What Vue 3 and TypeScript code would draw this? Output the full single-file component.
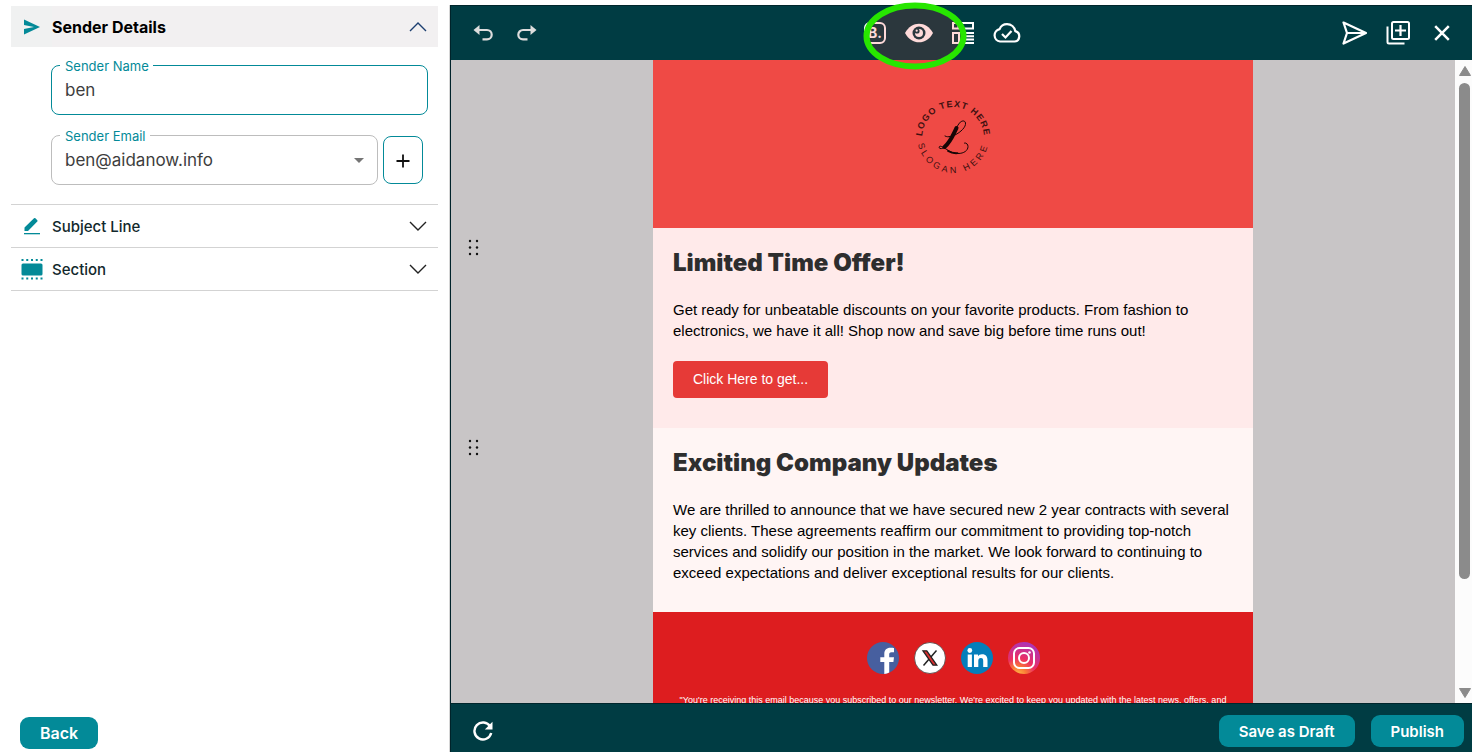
<script setup lang="ts">
import { ref } from 'vue'

interface Section {
  id: string
  tone: string
  title: string
  body: string
  action?: string
}

const senderName = ref('ben')
const senderEmail = ref('ben@aidanow.info')
const emails = ['ben@aidanow.info']

const sections: Section[] = [
  {
    id: 'offer',
    tone: 'tone-rose',
    title: 'Limited Time Offer!',
    body: 'Get ready for unbeatable discounts on your favorite products. From fashion to electronics, we have it all! Shop now and save big before time runs out!',
    action: 'Click Here to get...',
  },
  {
    id: 'updates',
    tone: 'tone-blush',
    title: 'Exciting Company Updates',
    body: 'We are thrilled to announce that we have secured new 2 year contracts with several key clients. These agreements reaffirm our commitment to providing top-notch services and solidify our position in the market. We look forward to continuing to exceed expectations and deliver exceptional results for our clients.',
  },
]
</script>

<template>
  <div class="app">
    <aside class="sidebar">
      <div class="panels">
        <button class="panel-head open" type="button" aria-expanded="true">
          <span class="panel-icon lead">
            <svg width="18" height="16" viewBox="0 0 18 16"><path d="M1 .5 17 8 1 15.500V10L11 8 1 6Z" fill="#038a98" /></svg>
          </span>
          <span class="panel-title">Sender Details</span>
          <svg class="chevron" width="18" height="10" viewBox="0 0 18 10"><path d="M1 9 9 1l8 8" fill="none" stroke="#1c3f70" stroke-width="1.4" /></svg>
        </button>

        <div class="panel-body">
          <div class="field active">
            <label for="sender-name">Sender Name</label>
            <input id="sender-name" v-model="senderName" type="text" />
          </div>
          <div class="email-row">
            <div class="field">
              <label for="sender-email">Sender Email</label>
              <select id="sender-email" v-model="senderEmail">
                <option v-for="e in emails" :key="e" :value="e">{{ e }}</option>
              </select>
              <svg class="caret" width="10" height="5" viewBox="0 0 10 5"><path d="M0 0h10L5 5Z" fill="#757575" /></svg>
            </div>
            <button class="add" type="button" aria-label="Add sender email">
              <svg width="14" height="16" viewBox="0 0 14 16"><path d="M7 2.500v13M.5 9h13" stroke="#111" stroke-width="1.8" /></svg>
            </button>
          </div>
        </div>

        <button class="panel-head" type="button" aria-expanded="false">
          <span class="panel-icon">
            <svg width="18" height="18" viewBox="0 0 18 18" fill="#038a98"><path d="M1.500 14V10.500L11 1.300a1 1 0 0 1 1.400 0L14.300 3.200a1 1 0 0 1 0 1.400L5 14Z" /><path d="M1 16h16V17.300H1Z" /></svg>
          </span>
          <span class="panel-title">Subject Line</span>
          <svg class="chevron" width="18" height="10" viewBox="0 0 18 10"><path d="m1 1 8 8 8-8" fill="none" stroke="#222" stroke-width="1.4" /></svg>
        </button>

        <button class="panel-head" type="button" aria-expanded="false">
          <span class="panel-icon">
            <svg width="22" height="22" viewBox="0 0 22 22"><rect x=".5" y="5.500" width="21" height="12" rx="1.500" fill="#038a98" /><path d="M.5 2h21M.5 20.500h21" stroke="#038a98" stroke-width="2" stroke-dasharray="2 2.750" /></svg>
          </span>
          <span class="panel-title">Section</span>
          <svg class="chevron" width="18" height="10" viewBox="0 0 18 10"><path d="m1 1 8 8 8-8" fill="none" stroke="#222" stroke-width="1.4" /></svg>
        </button>
      </div>

      <button class="btn back" type="button">Back</button>
    </aside>

    <main class="editor">
      <header class="toolbar">
        <div class="tools">
          <button type="button" aria-label="Undo">
            <svg width="20" height="18" viewBox="0 0 20 18"><path d="M5 6h9a4.700 4.700 0 0 1 0 9.400H9.500" fill="none" stroke="#ddd" stroke-width="2.200" /><path d="M.5 6 6.500 1v10Z" fill="#ddd" /></svg>
          </button>
          <button type="button" aria-label="Redo">
            <svg width="20" height="18" viewBox="0 0 20 18"><path d="M15 6H6a4.700 4.700 0 0 0 0 9.400h4.500" fill="none" stroke="#ddd" stroke-width="2.200" /><path d="M19.500 6 13.500 1v10Z" fill="#ddd" /></svg>
          </button>
        </div>

        <div class="tools">
          <button type="button" aria-label="Brand">
            <svg width="22" height="22" viewBox="0 0 22 22"><rect x="1" y="1" width="20" height="20" rx="5" fill="none" stroke="#fff" stroke-width="2" /><text class="brand-b" x="4" y="16">B.</text></svg>
          </button>
          <button class="preview" type="button" aria-label="Preview">
            <svg width="28" height="20" viewBox="0 0 28 20"><path d="M0 10C3.500 3.600 8.500.7 14 .7S24.500 3.600 28 10c-3.500 6.400-8.500 9.300-14 9.300S3.500 16.400 0 10Z" fill="#fff" /><circle cx="14" cy="10" r="6.500" fill="#003c43" /><circle cx="14" cy="10" r="4" fill="#fff" /><circle cx="12" cy="8" r="2.600" fill="#003c43" /><circle cx="11.700" cy="7.700" r="1.100" fill="#fff" /></svg>
            <svg class="spotlight" width="104" height="68" viewBox="0 0 104 68"><ellipse cx="52" cy="34" rx="48.500" ry="30.500" fill="#ff2324" fill-opacity=".17" stroke="none" /><ellipse cx="52" cy="34" rx="48.500" ry="30.500" fill="none" stroke="#27e600" stroke-width="6" /></svg>
          </button>
          <button type="button" aria-label="Layout">
            <svg width="22" height="22" viewBox="0 0 22 22" fill="none" stroke="#fff" stroke-width="2"><path d="M1 1h20v5.500H1ZM6.500 1v5.500M1 11h6v10H1Z" /><path d="M10 11h12M10 14.300h12M10 17.600h12M10 21h12" /></svg>
          </button>
          <button type="button" aria-label="Saved to cloud">
            <svg width="28" height="20" viewBox="0 0 28 20" fill="none" stroke="#fff" stroke-width="2.200"><path d="M7 18.500h14.500a5.300 5.300 0 0 0 .8-10.400C21.500 4.200 18.200 1.200 14 1.200c-3.400 0-6.200 1.900-7.400 4.900A6.300 6.300 0 0 0 7 18.500Z" /><path d="m9 11 3.500 3.500 6-6.500" /></svg>
          </button>
        </div>

        <div class="tools">
          <button type="button" aria-label="Send">
            <svg width="26" height="24" viewBox="0 0 26 24" fill="none" stroke="#fff" stroke-width="2.200" stroke-linejoin="round"><path d="M2.500 1.500 25 12l-22.500 10.500L6 12ZM6 12h17" /></svg>
          </button>
          <button type="button" aria-label="Duplicate">
            <svg width="24" height="24" viewBox="0 0 24 24" fill="none" stroke="#fff" stroke-width="2"><rect x="6" y="1" width="17" height="17" rx="1.500" /><path d="M1.500 5.500V21a1.500 1.500 0 0 0 1.500 1.500h15.500" /><path d="M14.500 4v11M9 9.500h11" stroke-width="2.200" /></svg>
          </button>
          <button type="button" aria-label="Close">
            <svg width="16" height="16" viewBox="0 0 16 16"><path d="m1.200 1.200 13.600 13.600M14.800 1.200 1.200 14.800" stroke="#fff" stroke-width="2.500" /></svg>
          </button>
        </div>
      </header>

      <div class="stage">
        <div class="canvas">
          <div class="row">
            <div class="hero">
              <svg width="88" height="92" viewBox="-5 -2 88 92" role="img" aria-label="Logo">
                <defs>
                  <path id="arc-top" d="M8 40A31 31 0 0 1 70 40" />
                  <path id="arc-bottom" d="M3 38A36 37 0 0 0 75 38" />
                </defs>
                <text class="ring"><textPath href="#arc-top" startOffset="50%">LOGO TEXT HERE</textPath></text>
                <text class="ring slogan"><textPath href="#arc-bottom" startOffset="50%">SLOGAN HERE</textPath></text>
                <g fill="none" stroke="#170606" stroke-linecap="round">
                  <path d="M41 37c6-3 11-8 10.500-12-.5-3-4-2.500-6 0-4 5-8 16-13 22-2 3-5 4-6.500 3.500-2-1-.5-3 1.500-2 5 2 9 7 16.500 7 6 0 10-3 10-7 0-2-1.500-4-3.500-3.500M31 38c2 1 3.500 1 5 .5" stroke-width="1" />
                  <path d="M42.500 30c-3 6-6 14-12 19" stroke-width="4" />
                  <path d="M34 53c3 1.800 6 2.500 9.500 2.200" stroke-width="1.800" />
                </g>
              </svg>
            </div>
          </div>

          <section v-for="s in sections" :key="s.id" class="row">
            <button class="drag" type="button" :aria-label="`Move ${s.title}`">
              <svg width="12" height="17" viewBox="0 0 12 17" fill="#111"><circle cx="2" cy="2" r="1.200" /><circle cx="9" cy="2" r="1.200" /><circle cx="2" cy="8.500" r="1.200" /><circle cx="9" cy="8.500" r="1.200" /><circle cx="2" cy="15" r="1.200" /><circle cx="9" cy="15" r="1.200" /></svg>
            </button>
            <div class="block" :class="s.tone">
              <h2>{{ s.title }}</h2>
              <p>{{ s.body }}</p>
              <a v-if="s.action" class="cta" href="#">{{ s.action }}</a>
            </div>
          </section>

          <div class="row">
            <div class="foot">
              <div class="socials">
                <a href="#" aria-label="Facebook">
                  <svg width="32" height="32" viewBox="0 0 32 32"><circle cx="16" cy="16" r="16" fill="#475f9f" /><path d="M17.300 31.900V20H13.300v-4.700h4V12c0-4 2.400-6.200 6-6.200 1.700 0 3.200.2 3.700.3v4.200h-2.500c-2 0-2.300 1-2.300 2.300v2.700H27l-.6 4.700h-4.200v10.500c-1.500.9-3.100 1.300-4.900 1.400Z" fill="#fff" /></svg>
                </a>
                <a href="#" aria-label="X">
                  <svg width="32" height="32" viewBox="0 0 32 32"><circle cx="16" cy="16" r="15.500" fill="#fff" stroke="#333" stroke-width=".7" /><path d="M22.500 8.500 9.500 23.500" stroke="#222" stroke-width="1.500" /><path d="M9 8.800h3.800l10 14.400H19Z" fill="#d9302f" stroke="#222" stroke-width="1.300" /></svg>
                </a>
                <a href="#" aria-label="LinkedIn">
                  <svg width="32" height="32" viewBox="0 0 32 32"><circle cx="16" cy="16" r="16" fill="#057ebb" /><circle cx="8.800" cy="8.500" r="2.400" fill="#fff" /><path d="M6.700 12.500h4.200V25H6.700Z" fill="#fff" /><path d="M13 12.500h4v1.800c.7-1.300 2-2.100 4-2.100 4.200 0 5.500 2.600 5.500 6.400V25h-4.300v-5.700c0-1.500-.1-3.300-2.300-3.300s-2.600 1.600-2.600 3.200V25H13Z" fill="#fff" /></svg>
                </a>
                <a href="#" aria-label="Instagram">
                  <svg width="32" height="32" viewBox="0 0 32 32">
                    <defs>
                      <radialGradient id="insta" cx=".3" cy="1.050" r="1.100"><stop offset="0" stop-color="#ffc34a" /><stop offset=".25" stop-color="#fa7a36" /><stop offset=".5" stop-color="#ec2f63" /><stop offset="1" stop-color="#a834bd" /></radialGradient>
                    </defs>
                    <circle cx="16" cy="16" r="16" fill="url(#insta)" />
                    <g fill="none" stroke="#fff" stroke-width="2"><rect x="6" y="6" width="20" height="20" rx="5.500" /><circle cx="16" cy="16" r="5" /></g>
                    <circle cx="21.500" cy="10.500" r="1.300" fill="#fff" />
                  </svg>
                </a>
              </div>
              <p class="legal">"You're receiving this email because you subscribed to our newsletter. We're excited to keep you updated with the latest news, offers, and</p>
            </div>
          </div>
        </div>

        <div class="scroll" aria-hidden="true">
          <svg width="12" height="10" viewBox="0 0 12 10"><path d="M6 .5 11.500 9.500H.5Z" fill="#8b8b8b" stroke="#8b8b8b" stroke-linejoin="round" /></svg>
          <div class="track"><div class="thumb"></div></div>
          <svg width="12" height="10" viewBox="0 0 12 10"><path d="M6 9.500 11.500.5H.5Z" fill="#8b8b8b" stroke="#8b8b8b" stroke-linejoin="round" /></svg>
        </div>
      </div>

      <footer class="bottombar">
        <button class="reload" type="button" aria-label="Reload">
          <svg width="20" height="20" viewBox="0 0 20 20"><path d="M17.200 5.500A8.500 8.500 0 1 0 18.200 12" fill="none" stroke="#fff" stroke-width="2.400" /><path d="M19.500.8V8.500H11.800Z" fill="#fff" /></svg>
        </button>
        <div class="actions">
          <button class="btn" type="button">Save as Draft</button>
          <button class="btn" type="button">Publish</button>
        </div>
      </footer>
    </main>
  </div>
</template>

<style>
body {
  margin: 0;
  background: #fff;
}
</style>

<style scoped>
.app {
  display: grid;
  grid-template-columns: clamp(320px, 31vw, 450px) minmax(0, 1fr);
  height: 100vh;
  padding-top: 5px;
  box-sizing: border-box;
  overflow: hidden;
  font-family: Inter, 'Liberation Sans', sans-serif;
}
.app * {
  box-sizing: border-box;
}
svg {
  display: block;
  flex: none;
}
button {
  font: inherit;
  color: inherit;
  background: none;
  border: 0;
  padding: 0;
  cursor: pointer;
}

.sidebar {
  display: flex;
  flex-direction: column;
  justify-content: space-between;
  align-items: flex-start;
  border-right: 1px solid #d6d6d6;
  padding: 1px 11px 3px;
}
.panels {
  width: 100%;
}
.panel-head {
  display: flex;
  align-items: center;
  width: 100%;
  height: 43px;
  padding-right: 11px;
  border-bottom: 1px solid #d3d3d3;
  font-size: 15px;
  font-weight: 500;
  color: #12282c;
}
.panel-head.open {
  height: 41px;
  border: 0;
  background: #f2f0f1;
  font-size: 16px;
  font-weight: 700;
  color: #000;
}
.panel-icon {
  display: flex;
  align-items: center;
  justify-content: center;
  width: 41px;
  height: 100%;
}
.lead {
  background: #f0f1f1;
}
.panel-title {
  flex: 1;
  text-align: left;
}
.panel-body {
  display: grid;
  gap: 20px;
  padding: 18px 10px 19px 40px;
  border-bottom: 1px solid #d3d3d3;
}
.field {
  position: relative;
  flex: 1;
  min-width: 0;
}
.field label {
  position: absolute;
  top: -7px;
  left: 9px;
  padding: 0 4px 0 5px;
  background: #fff;
  color: #038a98;
  font-size: 13px;
  line-height: 16px;
}
.field input,
.field select {
  display: block;
  width: 100%;
  height: 50px;
  padding: 0 13px;
  border: 1px solid #bdbdbd;
  border-radius: 8px;
  background: #fff;
  color: #3d3d3d;
  font: 17px Inter, 'Liberation Sans', sans-serif;
  appearance: none;
  outline: none;
}
.field.active input {
  border-color: #038a98;
}
.caret {
  position: absolute;
  right: 14px;
  top: 23px;
  pointer-events: none;
}
.email-row {
  display: flex;
  align-items: center;
  gap: 5px;
  padding-right: 5px;
}
.add {
  display: flex;
  align-items: center;
  justify-content: center;
  width: 40px;
  height: 48px;
  border: 1px solid #038a98;
  border-radius: 8px;
}
.btn {
  height: 32px;
  padding: 0 20px;
  border-radius: 9px;
  background: #038a98;
  color: #fff;
  font-size: 16px;
  font-weight: 600;
  white-space: nowrap;
}
.back {
  margin-left: 9px;
}

.editor {
  display: flex;
  flex-direction: column;
  min-height: 0;
  border-left: 1px solid #00232a;
}
.toolbar {
  display: flex;
  justify-content: space-between;
  height: 55px;
  padding: 0 8px 0 10px;
  background: #003c43;
  border-top: 1px solid #00262c;
}
.tools {
  display: flex;
}
.tools button {
  display: flex;
  align-items: center;
  justify-content: center;
  width: 44px;
}
.preview {
  position: relative;
}
.spotlight {
  position: absolute;
  top: -4px;
  left: -34px;
  z-index: 2;
  pointer-events: none;
}
.brand-b {
  font: bold 14px Inter, sans-serif;
  fill: #fff;
}

.stage {
  display: flex;
  flex: 1;
  min-height: 0;
  background: #c8c5c6;
}
.canvas {
  flex: 1;
  min-width: 0;
  overflow: hidden;
}
.row {
  display: grid;
  grid-template-columns: minmax(30px, 1fr) minmax(0, 600px) minmax(0, 1fr);
  align-items: start;
}
.hero,
.block,
.foot {
  grid-column: 2;
}
.drag {
  justify-self: start;
  padding: 11px 0 0 17px;
}
.hero {
  display: flex;
  justify-content: center;
  padding: 36px 20px 40px;
  background: #ef4a45;
}
.ring {
  font: bold 9px 'Liberation Sans', sans-serif;
  letter-spacing: 1px;
  text-anchor: middle;
  fill: #401010;
}
.slogan {
  font-weight: normal;
  letter-spacing: 3px;
}
.block {
  padding: 20px 20px 29px;
  font-family: 'Liberation Sans', Arial, sans-serif;
}
.tone-rose {
  background: #ffeaea;
  padding-bottom: 30px;
}
.tone-blush {
  background: #fff5f4;
}
.block h2 {
  margin: 0 0 21px;
  font: 900 24px/30px 'Arial Black', Inter, sans-serif;
  color: #2e2e2e;
}
.block p {
  margin: 0;
  font-size: 15px;
  line-height: 21px;
  color: #000;
}
.cta {
  display: block;
  width: fit-content;
  margin-top: 20px;
  padding: 0 20px;
  border-radius: 4px;
  background: #e63a37;
  color: #fff;
  font-size: 14px;
  line-height: 37px;
  text-decoration: none;
}
.foot {
  padding: 30px 20px;
  background: #dd1d1f;
}
.socials {
  display: flex;
  justify-content: center;
  gap: 15px;
}
.legal {
  margin: 20px 0 0;
  font: 9px/12px 'Liberation Sans', Arial, sans-serif;
  color: #fff;
  text-align: center;
}

.scroll {
  display: flex;
  flex-direction: column;
  align-items: center;
  gap: 7px;
  width: 17px;
  padding: 6px 0 5px 2px;
  background: #fcfcfc;
}
.track {
  flex: 1;
  width: 11px;
}
.thumb {
  height: 83%;
  border-radius: 6px;
  background: #8b8b8b;
}

.bottombar {
  display: flex;
  align-items: center;
  justify-content: space-between;
  height: 49px;
  padding: 6px 8px 0 22px;
  background: #003c43;
  border-top: 1px solid #00262c;
}
.actions {
  display: flex;
  gap: 16px;
}
.actions .btn {
  font-size: 15px;
}
</style>
